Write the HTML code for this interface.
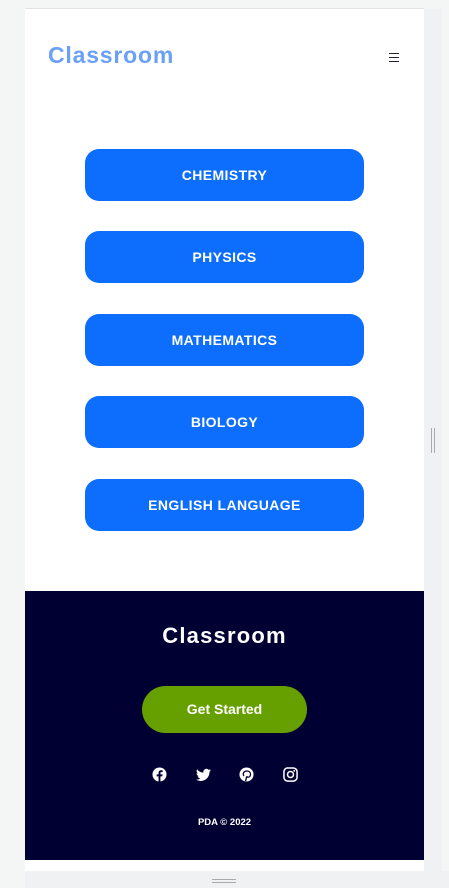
<!DOCTYPE html>
<html><head><meta charset="utf-8"><style>
*{margin:0;padding:0;box-sizing:border-box}
body{width:449px;height:888px;background:#f4f5f5;position:relative;overflow:hidden;font-family:"Liberation Sans",sans-serif}
.strip{position:absolute;left:424px;top:9px;width:18px;height:879px;background:#f0f1f3}
.bot{position:absolute;left:25px;top:871px;width:424px;height:17px;background:#f0f1f3}
.frame{position:absolute;left:25px;top:8px;width:399px;height:863px;background:#fff;border-top:1px solid #e4e4e4}
.logo{position:absolute;left:23px;top:33px;font-weight:bold;font-size:23px;color:#6aa0f7;letter-spacing:0.8px}
.ham{position:absolute;left:364px;top:44px;width:10px}
.ham i{display:block;height:1px;background:#223;margin-bottom:3px}
.btn{position:absolute;left:60px;width:279px;height:52px;background:#0d6efd;border-radius:14px;color:#fff;font-weight:bold;font-size:14px;letter-spacing:0.4px;text-align:center;line-height:52px}
.foot{position:absolute;left:0;top:582px;width:399px;height:269px;background:#000033;color:#fff;text-align:center}
.ft{position:absolute;left:0;width:100%;top:32px;font-size:22px;font-weight:bold;letter-spacing:1.2px}
.gs{position:absolute;left:117px;top:95px;width:165px;height:47px;border-radius:24px;background:#65a000;line-height:47px;font-weight:bold;font-size:14px}
.ic{position:absolute;top:176px;width:15px;height:15px}
.cp{position:absolute;left:0;width:100%;top:226px;font-size:9.5px;font-weight:bold}
.sb{position:absolute;left:431px;top:428px;width:4px;height:25px;border-left:1px solid #aaa;border-right:1px solid #aaa}
.hb{position:absolute;left:212px;top:879px;width:24px;height:4px;border-top:1px solid #aaa;border-bottom:1px solid #aaa}
</style></head><body>
<div class="strip"></div><div class="bot"></div>
<div class="frame">
<div class="logo">Classroom</div>
<div class="ham"><i></i><i></i><i></i></div>
<div class="btn" style="top:140px">CHEMISTRY</div>
<div class="btn" style="top:222px">PHYSICS</div>
<div class="btn" style="top:305px">MATHEMATICS</div>
<div class="btn" style="top:387px">BIOLOGY</div>
<div class="btn" style="top:470px">ENGLISH LANGUAGE</div>
<div class="foot">
<div class="ft">Classroom</div>
<div class="gs">Get Started</div>
<svg class="ic" style="left:127px" viewBox="0 0 16 16"><circle cx="8" cy="8" r="7.5" fill="#fff"/><path d="M9 16V10h2l.3-2.2H9V6.5c0-.6.2-1 1-1h1.3V3.6C11 3.5 10.4 3.5 9.8 3.5 8.2 3.5 7 4.4 7 6.2v1.6H5V10h2v6z" fill="#000033"/></svg>
<svg class="ic" style="left:171px" viewBox="0 0 16 16"><path fill="#fff" d="M16 3.5a6.6 6.6 0 0 1-1.9.5 3.3 3.3 0 0 0 1.4-1.8 6.6 6.6 0 0 1-2 .8A3.3 3.3 0 0 0 7.9 6 9.3 9.3 0 0 1 1.1 2.5a3.3 3.3 0 0 0 1 4.4 3.3 3.3 0 0 1-1.5-.4 3.3 3.3 0 0 0 2.6 3.2 3.3 3.3 0 0 1-1.5.1 3.3 3.3 0 0 0 3.1 2.3A6.6 6.6 0 0 1 0 13.4 9.3 9.3 0 0 0 5 14.9c6 0 9.4-5 9.4-9.4v-.4A6.7 6.7 0 0 0 16 3.5z"/></svg>
<svg class="ic" style="left:214px" viewBox="0 0 16 16"><circle cx="8" cy="8" r="7.5" fill="#fff"/><path d="M7 15l1.2-5M8.2 10c.4.6 1 .9 1.6.9 1.7 0 2.5-1.6 2.5-3.3 0-2-1.7-3.3-4-3.3-2.5 0-3.8 1.7-3.8 3.3 0 .9.4 1.6 1 1.9" stroke="#000033" stroke-width="1.4" fill="none"/></svg>
<svg class="ic" style="left:258px" viewBox="0 0 16 16"><rect x="1" y="1" width="14" height="14" rx="4" fill="none" stroke="#fff" stroke-width="1.6"/><circle cx="8" cy="8" r="3.2" fill="none" stroke="#fff" stroke-width="1.6"/><circle cx="12" cy="4" r="1" fill="#fff"/></svg>
<div class="cp">PDA © 2022</div>
</div>
</div>
<div class="sb"></div><div class="hb"></div>
</body></html>
